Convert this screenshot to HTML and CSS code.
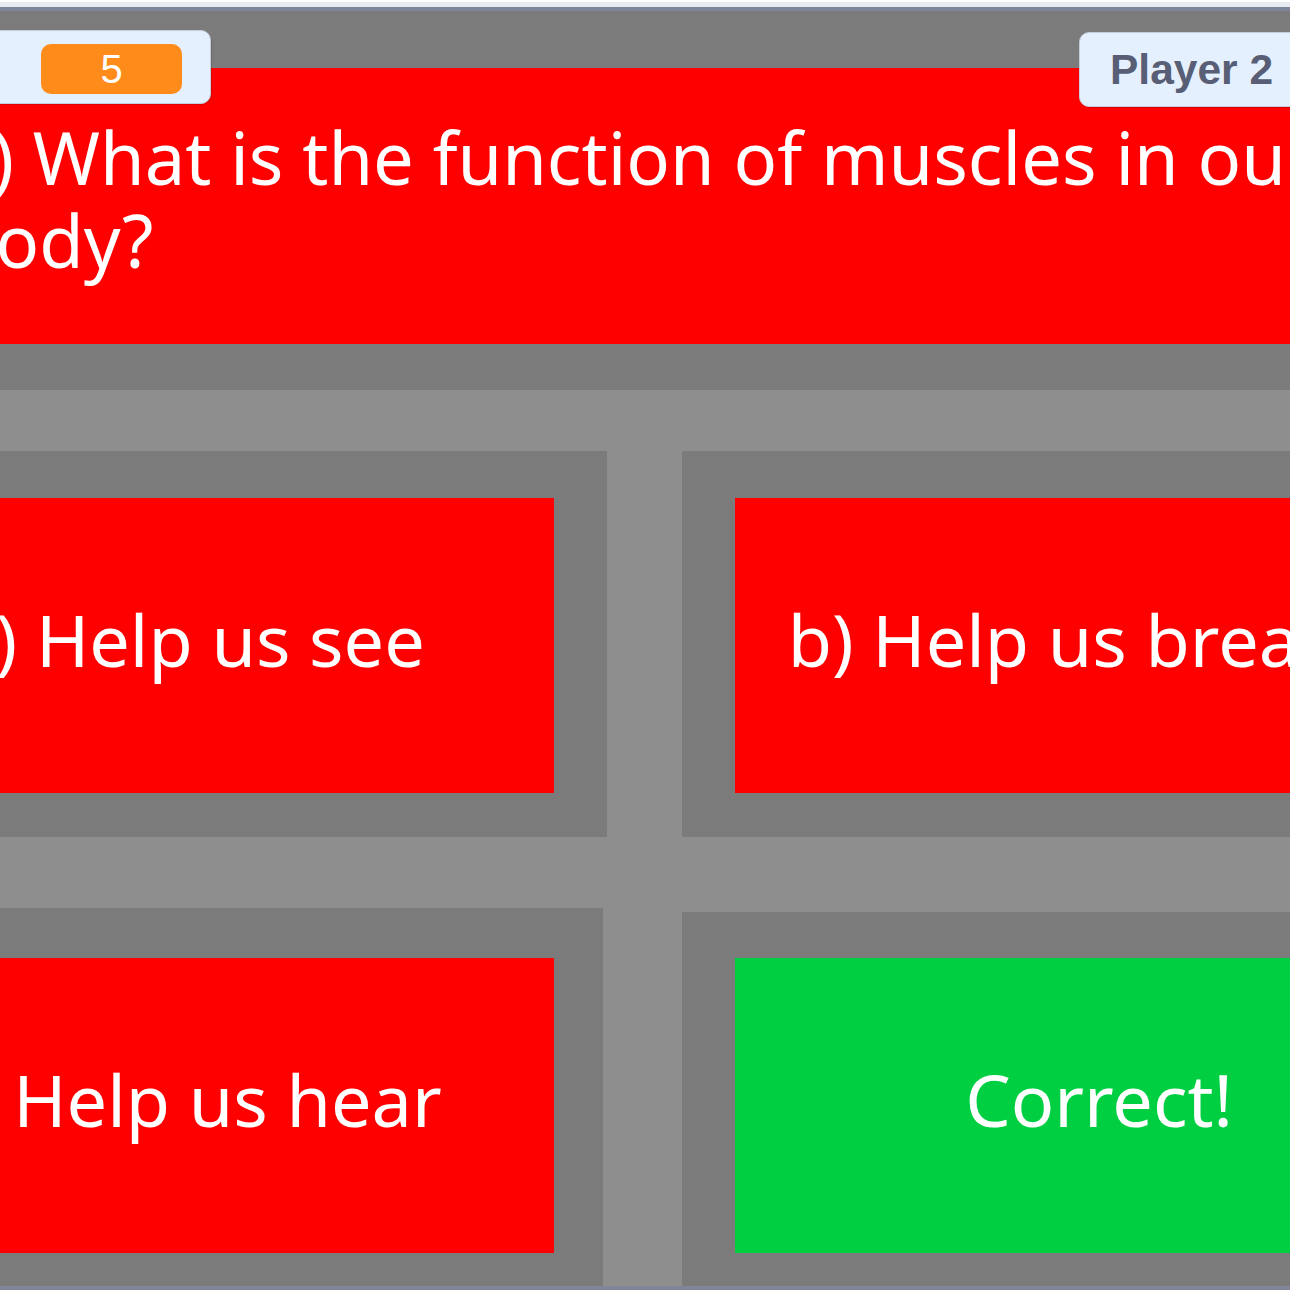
FILE: index.html
```html
<!DOCTYPE html>
<html lang="en">
<head>
<meta charset="utf-8">
<title>Quiz</title>
<link rel="stylesheet" href="styles.css">
</head>
<body>
<div class="page">
  <div class="topbar"></div>
  <div class="stage">
    <div class="monitor monitor-left">
      <div class="readout">5</div>
    </div>
    <div class="monitor monitor-right">Player 2</div>
    <div class="canvas">
      <div class="question">1) What is the function of muscles in our<br>body?</div>
      <div class="band"></div>
      <div class="answers">
        <div class="cell cell-a"><div class="answer red">a) Help us see</div></div>
        <div class="cell cell-b"><div class="answer red">b) Help us breathe</div></div>
        <div class="cell cell-c"><div class="answer red">c) Help us hear</div></div>
        <div class="cell cell-d"><div class="answer green">Correct!</div></div>
      </div>
    </div>
  </div>
</div>
</body>
</html>
```

FILE: styles.css
```css
html, body {
  margin: 0;
  padding: 0;
  background: #ffffff;
  overflow: hidden;
}

.page {
  width: 1290px;
  height: 1290px;
  overflow: hidden;
}

.topbar {
  height: 5px;
  margin-top: 2px;
  background: #e8ecf1;
}

.stage {
  position: relative;
  height: 1275px;
  border-top: 4px solid #7f8699;
  border-bottom: 4px solid #7f8699;
  background: #7b7b7b;
  overflow: hidden;
}

.canvas {
  width: 1743px;
  margin-left: -227px;
}

.question {
  margin-top: 57px;
  height: 276px;
  box-sizing: border-box;
  padding: 48px 0 0 178px;
  background: #ff0000;
  color: #ffffff;
  font-family: "Noto Sans", "Open Sans", sans-serif;
  font-size: 72.3px;
  line-height: 83px;
  white-space: nowrap;
}

.band {
  margin-top: 46px;
  height: 61px;
  background: #8e8e8e;
}

.answers {
  display: grid;
  grid-template-columns: 834px 834px;
  grid-template-rows: 386px 378px;
  column-gap: 75px;
  row-gap: 71px;
  background: #8e8e8e;
}

.cell {
  background: #7b7b7b;
  box-sizing: border-box;
  padding-left: 53px;
}

.cell-a, .cell-b {
  padding-top: 47px;
}

.cell-c {
  margin-right: 4px;
  padding-top: 50px;
}

.cell-d {
  margin-top: 4px;
  padding-top: 46px;
}

.answer {
  width: 728px;
  height: 295px;
  box-sizing: border-box;
  padding-bottom: 14px;
  display: flex;
  align-items: center;
  justify-content: center;
  color: #ffffff;
  font-family: "Noto Sans", "Open Sans", sans-serif;
  font-size: 72px;
  white-space: nowrap;
}

.red { background: #ff0000; }
.green { background: #00cf42; }

.monitor {
  position: absolute;
  box-sizing: border-box;
  background: #e5f0ff;
  border: 1px solid #c5cddc;
  border-radius: 10px;
  box-shadow: 1px 1px 0 rgba(0, 0, 0, 0.12);
  z-index: 2;
}

.monitor-left {
  top: 19px;
  left: -40px;
  height: 74px;
  padding: 13px 28px 9px 80px;
  display: flex;
  align-items: flex-start;
}

.readout {
  width: 141px;
  height: 50px;
  border-radius: 10px;
  background: #ff8c1a;
  color: #ffffff;
  font-family: "Liberation Sans", Arial, sans-serif;
  font-size: 40px;
  line-height: 50px;
  text-align: center;
}

.monitor-right {
  top: 21px;
  left: 1079px;
  width: 260px;
  height: 75px;
  padding-left: 30px;
  display: flex;
  align-items: center;
  color: #575e75;
  font-family: "Liberation Sans", Arial, sans-serif;
  font-weight: bold;
  font-size: 42.5px;
}
```
